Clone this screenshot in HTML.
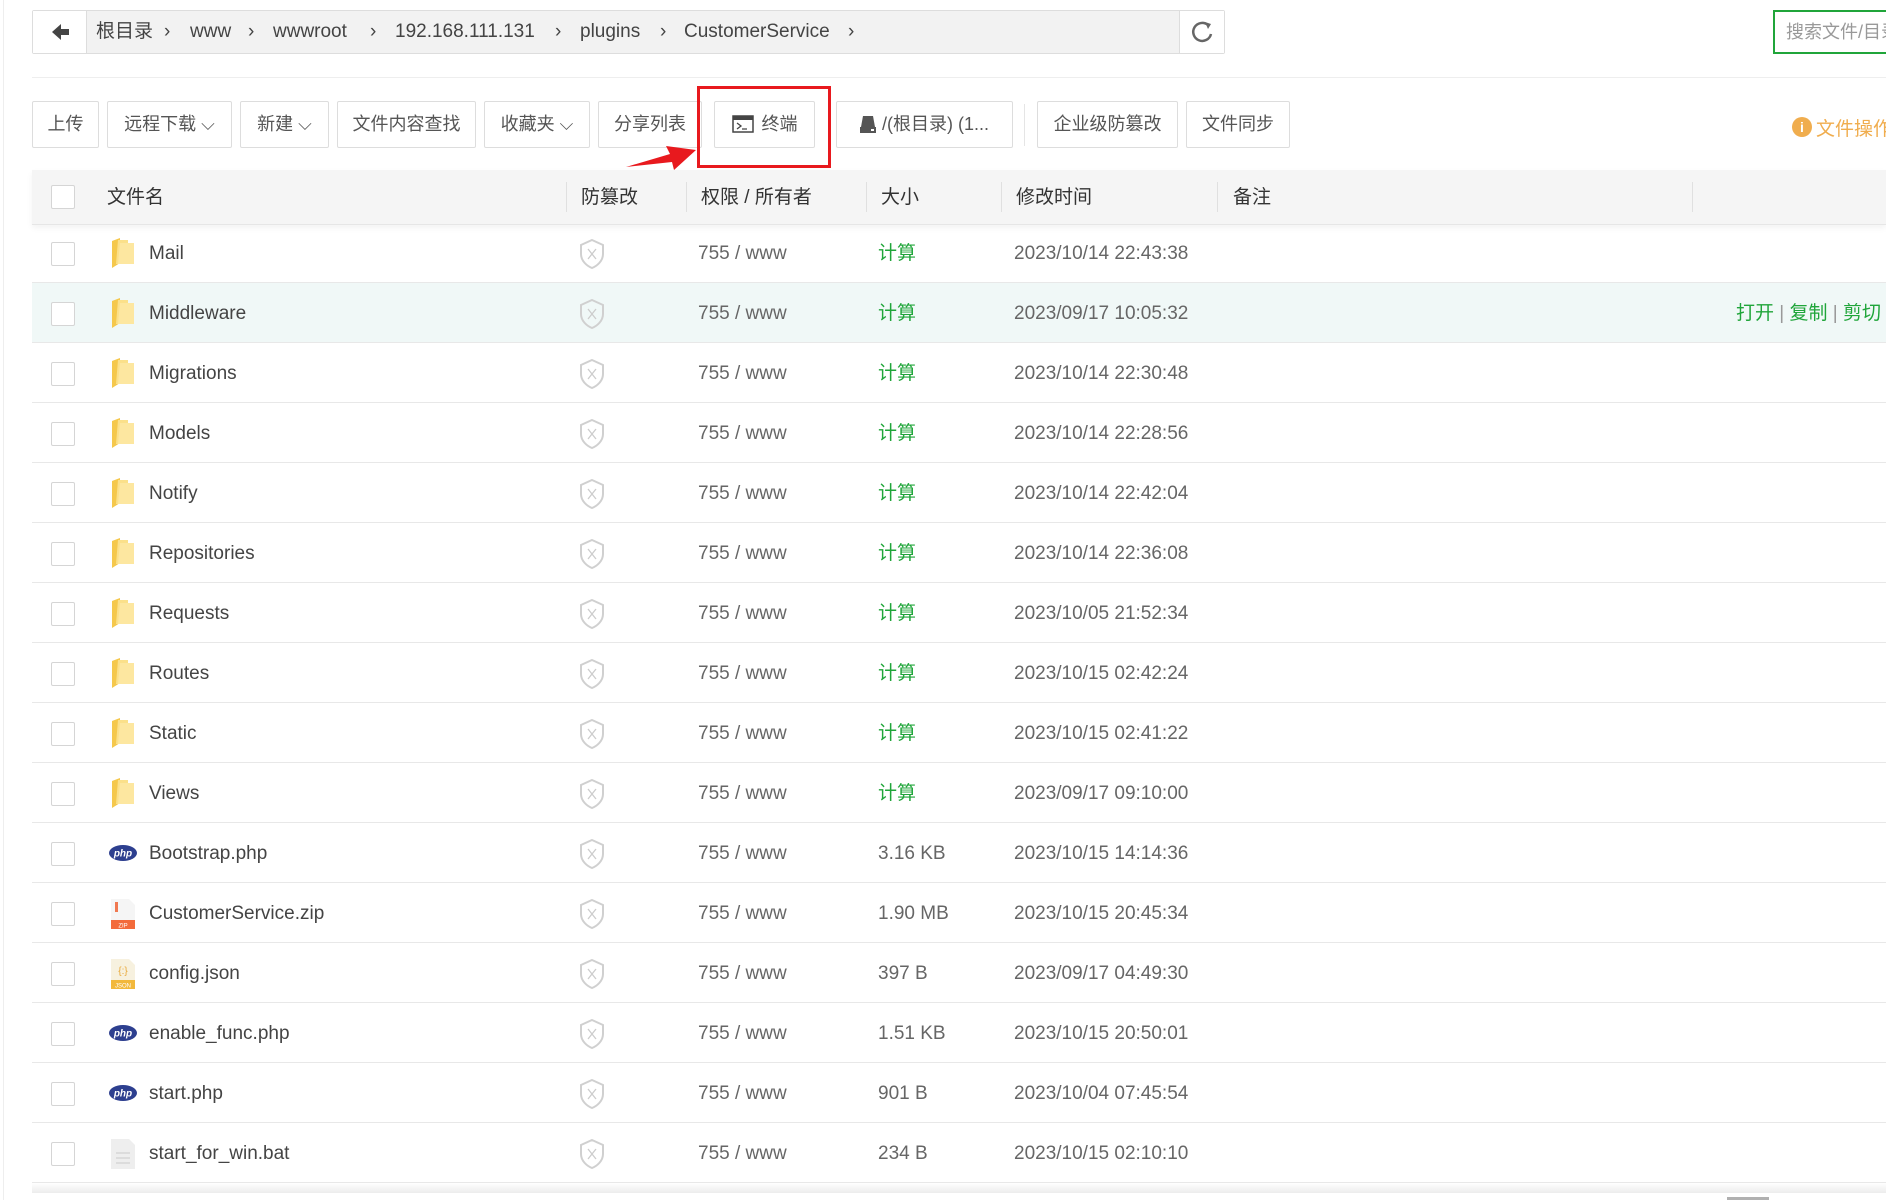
<!DOCTYPE html>
<html><head><meta charset="utf-8"><style>
*{box-sizing:border-box;margin:0;padding:0}
body{width:1886px;height:1200px;background:#fff;font-family:"Liberation Sans","Noto Sans CJK SC",sans-serif;color:#555;position:relative;overflow:hidden;font-size:19px}
.a{position:absolute}
.bc{left:32px;top:10px;width:1193px;height:44px;border:1px solid #ddd;border-radius:2px;background:#f2f2f2}
.bc .back{position:absolute;left:0;top:0;width:54px;height:42px;background:#fff;border-right:1px solid #ddd}
.bc .ref{position:absolute;right:0;top:0;width:45px;height:42px;background:#fff;border-left:1px solid #ddd}
.crumb{position:absolute;top:0;line-height:42px;font-size:19px;color:#444}
.btn{position:absolute;top:101px;height:47px;border:1px solid #ddd;border-radius:2px;background:#fff;font-size:18px;color:#555;text-align:center;line-height:45px}
.hdr{left:32px;top:170px;width:1854px;height:55px;background:#f5f5f5;border-bottom:1px solid #e6e6e6;z-index:2;box-shadow:0 3px 6px rgba(0,0,0,0.05)}
.hdr span{position:absolute;top:0;line-height:55px;font-size:19px;color:#333}
.sep{position:absolute;top:12px;width:1px;height:30px;background:#e0e0e0}
.row{position:absolute;left:32px;width:1854px;height:60px;border-bottom:1px solid #e8e8e8}
.row span{position:absolute;top:0;line-height:62px;font-size:19px}
.cb{position:absolute;left:19px;top:19px;width:24px;height:24px;border:1px solid #d5d5d5;border-radius:2px;background:#fff}
.nm{left:117px;color:#444}
.pm{left:666px;color:#666}
.sz{left:846px;color:#666}
.dt{left:982px;color:#666}
.calc{color:#20a53a}
</style></head><body>
<div class="a" style="left:3px;top:0;width:1px;height:1200px;background:#eee"></div>
<div class="a bc"><div class="back"><svg width="54" height="42"><path d="M19 21 L28 13 L28 18 L36 18 L36 24 L28 24 L28 29 Z" fill="#444"/></svg></div>
<div class="ref"><svg width="45" height="42"><path d="M28 14 A9 9 0 1 0 31 23" fill="none" stroke="#666" stroke-width="2.5"/><path d="M25 11 L31 13 L28 18 Z" fill="#666"/></svg></div>
<span class="crumb" style="left:63px">根目录</span><span class="crumb" style="left:131px">›</span>
<span class="crumb" style="left:157px">www</span><span class="crumb" style="left:215px">›</span>
<span class="crumb" style="left:240px">wwwroot</span><span class="crumb" style="left:337px">›</span>
<span class="crumb" style="left:362px">192.168.111.131</span><span class="crumb" style="left:522px">›</span>
<span class="crumb" style="left:547px">plugins</span><span class="crumb" style="left:627px">›</span>
<span class="crumb" style="left:651px">CustomerService</span><span class="crumb" style="left:815px">›</span>
</div>
<div class="a" style="left:1773px;top:10px;width:120px;height:44px;border:2px solid #20a53a;background:#fff"><span style="position:absolute;left:11px;top:0;line-height:40px;font-size:18px;color:#999;white-space:nowrap">搜索文件/目录</span></div>
<div class="a" style="left:32px;top:77px;width:1854px;height:1px;background:#eee"></div>

<div class="btn" style="left:32px;width:67px">上传</div>
<div class="btn" style="left:107px;width:125px">远程下载 ⌵</div>
<div class="btn" style="left:240px;width:89px">新建 ⌵</div>
<div class="btn" style="left:337px;width:139px">文件内容查找</div>
<div class="btn" style="left:484px;width:106px">收藏夹 ⌵</div>
<div class="btn" style="left:598px;width:104px">分享列表</div>
<div class="btn" style="left:714px;width:101px"><svg width="22" height="18" style="vertical-align:-3px;margin-right:8px"><rect x="1" y="1" width="20" height="16" fill="#fff" stroke="#444" stroke-width="1.5"/><rect x="1" y="1" width="20" height="4" fill="#444"/><path d="M5 8 L9 11 L5 14 M10 14 H15" stroke="#444" stroke-width="1.3" fill="none"/></svg>终端</div>
<div class="btn" style="left:836px;width:177px"><svg width="16" height="18" style="vertical-align:-3px;margin-right:6px"><path d="M3 1 H13 L15 12 H1 Z" fill="#555"/><rect x="0" y="12" width="16" height="6" fill="#555"/><rect x="11" y="14" width="3" height="2" fill="#fff"/></svg>/(根目录) (1...</div>
<div class="a" style="left:1024px;top:104px;width:1px;height:42px;background:#e5e5e5"></div>
<div class="btn" style="left:1037px;width:141px">企业级防篡改</div>
<div class="btn" style="left:1186px;width:104px">文件同步</div>
<div class="a" style="left:697px;top:86px;width:134px;height:82px;border:3px solid #e8191e"></div>
<svg class="a" style="left:620px;top:140px" width="80" height="35"><path d="M6 27 L50 14 L46 6 L76 10 L54 30 L52 22 Z" fill="#e8191e"/></svg>
<div class="a" style="left:1792px;top:117px;width:20px;height:20px;border-radius:50%;background:#f0ad4e;color:#fff;font-size:14px;font-weight:bold;text-align:center;line-height:20px">i</div>
<span class="a" style="left:1816px;top:114px;font-size:19px;color:#f0ad4e;white-space:nowrap">文件操作</span>

<div class="a hdr"><div class="cb" style="top:15px"></div>
<span style="left:75px">文件名</span><div class="sep" style="left:534px"></div>
<span style="left:549px">防篡改</span><div class="sep" style="left:654px"></div>
<span style="left:669px">权限 / 所有者</span><div class="sep" style="left:834px"></div>
<span style="left:849px">大小</span><div class="sep" style="left:969px"></div>
<span style="left:984px">修改时间</span><div class="sep" style="left:1185px"></div>
<span style="left:1201px">备注</span><div class="sep" style="left:1660px"></div>
</div>
<div id="rows"></div>
<div class="a" style="left:32px;top:1183px;width:1854px;height:10px;background:linear-gradient(#fff,#ececec)"></div>
<div class="a" style="left:1727px;top:1197px;width:42px;height:3px;background:#b0b0b0"></div>
<script>
var F='<svg width="26" height="32" style="position:absolute;left:78px;top:14px"><path d="M2 4 L10 1 L10 26 L2 31 Z" fill="#f5c84c"/><path d="M8 3 H18 V27 H6 Z" fill="#fbe08a"/><path d="M10 6 H24 V27 H8 Z" fill="#fde7a0"/></svg>';
var P='<svg width="30" height="18" style="position:absolute;left:76px;top:21px"><ellipse cx="15" cy="9" rx="14" ry="8" fill="#2d3f8f"/><text x="15" y="12.5" font-size="10" font-style="italic" font-weight="bold" fill="#fff" text-anchor="middle" font-family="Liberation Sans">php</text></svg>';
var Z='<svg width="26" height="30" style="position:absolute;left:78px;top:16px"><path d="M1 0 H19 L25 6 V30 H1 Z" fill="#f5f5f5"/><rect x="5" y="3" width="3" height="10" fill="#f07850"/><rect x="1" y="21" width="24" height="9" fill="#f36b3b"/><text x="13" y="28.5" font-size="6" fill="#fff" text-anchor="middle">ZIP</text></svg>';
var J='<svg width="26" height="30" style="position:absolute;left:78px;top:16px"><path d="M1 0 H19 L25 6 V30 H1 Z" fill="#f7f1df"/><text x="13" y="15" font-size="10" fill="#e9a93a" text-anchor="middle">{:}</text><rect x="1" y="21" width="24" height="9" fill="#f2b83c"/><text x="13" y="28.5" font-size="6" fill="#fff" text-anchor="middle">JSON</text></svg>';
var B='<svg width="26" height="30" style="position:absolute;left:78px;top:16px"><path d="M1 0 H19 L25 6 V30 H1 Z" fill="#eee"/><path d="M6 14 H20 M6 19 H20 M6 24 H20" stroke="#d5d5d5" stroke-width="1.5"/></svg>';
var S='<svg width="26" height="30" style="position:absolute;left:547px;top:16px"><path d="M13 1 L24 6 V15 C24 22 18 27 13 29 C8 27 2 22 2 15 V6 Z" fill="none" stroke="#d0d0d0" stroke-width="2"/><path d="M9 10 L17 20 M17 10 L9 20" stroke="#ccc" stroke-width="1.3"/></svg>';
var d=[[F,'Mail','计算','2023/10/14 22:43:38'],[F,'Middleware','计算','2023/09/17 10:05:32'],[F,'Migrations','计算','2023/10/14 22:30:48'],[F,'Models','计算','2023/10/14 22:28:56'],[F,'Notify','计算','2023/10/14 22:42:04'],[F,'Repositories','计算','2023/10/14 22:36:08'],[F,'Requests','计算','2023/10/05 21:52:34'],[F,'Routes','计算','2023/10/15 02:42:24'],[F,'Static','计算','2023/10/15 02:41:22'],[F,'Views','计算','2023/09/17 09:10:00'],[P,'Bootstrap.php','3.16 KB','2023/10/15 14:14:36'],[Z,'CustomerService.zip','1.90 MB','2023/10/15 20:45:34'],[J,'config.json','397 B','2023/09/17 04:49:30'],[P,'enable_func.php','1.51 KB','2023/10/15 20:50:01'],[P,'start.php','901 B','2023/10/04 07:45:54'],[B,'start_for_win.bat','234 B','2023/10/15 02:10:10']];
var h='';
d.forEach(function(r,i){h+='<div class="row" style="top:'+(223+i*60)+'px;'+(i==1?'background:#f0f8f7':'')+'"><div class="cb"></div>'+r[0]+'<span class="nm">'+r[1]+'</span>'+S+'<span class="pm">755 / www</span><span class="sz'+(r[2]=='计算'?' calc':'')+'">'+r[2]+'</span><span class="dt">'+r[3]+'</span>'+(i==1?'<span style="left:1704px;color:#20a53a;white-space:nowrap">打开 <b style="color:#999;font-weight:normal">|</b> 复制 <b style="color:#999;font-weight:normal">|</b> 剪切 <b style="color:#999;font-weight:normal">|</b></span>':'')+'</div>';});
document.getElementById('rows').innerHTML=h;
</script>
</body></html>
